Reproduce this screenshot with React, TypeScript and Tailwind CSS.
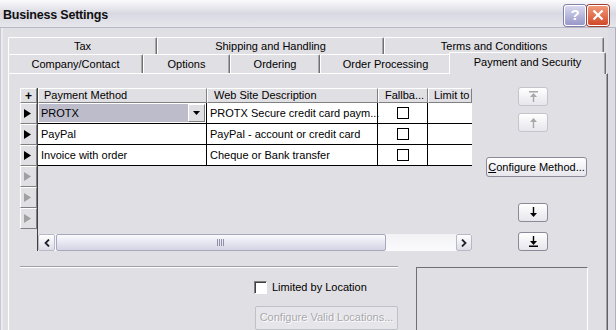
import React from "react";

const raised =
  "border border-t-white border-l-white border-r-[#808080] border-b-[#808080]";

const Tab = ({ label, w, selected }: { label: string; w: number; selected?: boolean }) => (
  <div
    style={{ width: selected ? w + 4 : w }}
    className={
      "flex shrink-0 items-center justify-center rounded-t-[2px] border-t border-l border-r border-t-white border-l-white border-r-[#707070] bg-[#e0dfe3] shadow-[inset_-1px_0_#a8a8ac] " +
      (selected ? "relative z-10 -mx-[2px] -mb-px h-[22px] pb-[3px]" : "h-full")
    }
  >
    {label}
  </div>
);

const Arrow = ({ dark }: { dark?: boolean }) => (
  <svg width="7" height="9" viewBox="0 0 7 9">
    <polygon points="0,0 7,4.5 0,9" fill={dark ? "#000" : "#a0a0a0"} />
  </svg>
);

const RowHead = ({ dark }: { dark?: boolean }) => (
  <div className={"flex h-[21px] items-center pl-[3px] bg-[#e0dfe3] " + raised}>
    <Arrow dark={dark} />
  </div>
);

const Check = () => (
  <div className="h-[12px] w-[12px] border border-black bg-white" />
);

const SmallBtn = ({ kind }: { kind: "top" | "up" | "down" | "bottom" }) => {
  const on = kind === "down" || kind === "bottom";
  const c = on ? "#000" : "#a8a8a8";
  return (
    <div
      className={
        "ml-[32px] flex h-[19px] w-[30px] items-center justify-center rounded-[3px] border bg-gradient-to-b from-white to-[#e6e6ec] " +
        (on ? "border-[#8a8a98]" : "border-[#c4c4cc]")
      }
    >
      <svg width="9" height="11" viewBox="0 0 9 11">
        {kind === "top" && (
          <>
            <rect x="0" y="0" width="9" height="1.5" fill={c} />
            <polygon points="4.5,2 8,6 5.2,6 5.2,11 3.8,11 3.8,6 1,6" fill={c} />
          </>
        )}
        {kind === "up" && (
          <polygon points="4.5,1 8,5 5.2,5 5.2,11 3.8,11 3.8,5 1,5" fill={c} />
        )}
        {kind === "down" && (
          <polygon points="3.8,0 5.2,0 5.2,6 8,6 4.5,10 1,6 3.8,6" fill={c} />
        )}
        {kind === "bottom" && (
          <>
            <polygon points="3.8,0 5.2,0 5.2,5 8,5 4.5,9 1,5 3.8,5" fill={c} />
            <rect x="0" y="9.5" width="9" height="1.5" fill={c} />
          </>
        )}
      </svg>
    </div>
  );
};

const rows = [
  { method: "PayPal", desc: "PayPal - account or credit card" },
  { method: "Invoice with order", desc: "Cheque or Bank transfer" },
];

export default function App() {
  return (
    <div className="flex h-[330px] w-[616px] flex-col overflow-hidden bg-[#e0dfe3] font-['Liberation_Sans',Arial,sans-serif] text-[11px] text-black">
      {/* title bar */}
      <div className="flex h-[28px] shrink-0 items-center justify-between border-b border-[#b8b8c4] bg-gradient-to-b from-[#fbfbfd] via-[#d9d9e2] to-[#e6e6ec] pl-[3px] pr-[7px]">
        <span className="mt-[3px] text-[12.5px] font-bold tracking-[-0.2px] text-[#101010]">Business Settings</span>
        <div className="mt-[3px] flex gap-px">
          <div className="flex h-[21px] w-[22px] items-center justify-center rounded-[3px] border border-white bg-gradient-to-b from-[#d8d8f0] to-[#9898c8] text-[15px] font-bold text-white shadow-[0_0_0_1px_#8080a8]">
            ?
          </div>
          <div className="flex h-[21px] w-[22px] items-center justify-center rounded-[3px] border border-white bg-gradient-to-b from-[#f09878] to-[#d04828] shadow-[0_0_0_1px_#a04030]">
            <svg width="12" height="12" viewBox="0 0 12 12">
              <path d="M1.5 1.5 L10.5 10.5 M10.5 1.5 L1.5 10.5" stroke="#fff" strokeWidth="2.2" />
            </svg>
          </div>
        </div>
      </div>

      {/* body */}
      <div className="flex min-h-0 flex-1">
        <div className="w-[3px] shrink-0 border-l border-[#c8c8d4] bg-[#ebebef]" />
        <div className="ml-[5px] flex w-[600px] shrink-0 flex-col pt-[9px]">
          {/* tab rows */}
          <div className="flex h-[17px] shrink-0 leading-none">
            <Tab label="Tax" w={149} />
            <Tab label="Shipping and Handling" w={227} />
            <Tab label="Terms and Conditions" w={220} />
          </div>
          <div className="flex h-[19px] shrink-0 items-end leading-none">
            <Tab label="Company/Contact" w={135} />
            <Tab label="Options" w={87} />
            <Tab label="Ordering" w={90} />
            <Tab label="Order Processing" w={131} />
            <Tab label="Payment and Security" w={153} selected />
          </div>

          {/* panel */}
          <div className="flex-1 border-t border-l border-r border-t-white border-l-white border-r-[#606060] pl-[11px] pt-[14px] shadow-[inset_-1px_0_#a0a0a4]">
            <div className="flex">
              {/* grid */}
              <div className="flex h-[163px] w-[452px]">
                <div className="flex w-[17px] flex-col">
                  <div className={"flex h-[15px] items-center justify-center bg-[#e0dfe3] text-[12px] font-bold " + raised}>
                    +
                  </div>
                  <RowHead dark />
                  <RowHead dark />
                  <RowHead dark />
                  <RowHead />
                  <RowHead />
                  <RowHead />
                </div>
                <div className="flex w-[435px] flex-col overflow-hidden border-l border-[#404040]">
                  <div className="flex h-[15px] shrink-0 whitespace-nowrap leading-[13px]">
                    <div className={"w-[169px] shrink-0 pl-[5px] " + raised}>Payment Method</div>
                    <div className={"w-[171px] shrink-0 pl-[6px] " + raised}>Web Site Description</div>
                    <div className={"w-[50px] shrink-0 pl-[6px] " + raised}>Fallba...</div>
                    <div className={"w-[44px] shrink-0 overflow-hidden pl-[5px] " + raised}>Limit to D</div>
                  </div>
                  <div className="flex h-[21px] shrink-0 items-stretch whitespace-nowrap border-b border-black bg-white">
                    <div className="flex w-[169px] shrink-0 items-center border-r border-black p-[1px]">
                      <div className="flex h-full flex-1 items-center justify-between bg-[#bdbccb] pl-[2px]">
                        <span>PROTX</span>
                        <div className={"flex h-[18px] w-[17px] items-center justify-center bg-[#e0dfe3] " + raised}>
                          <svg width="7" height="4" viewBox="0 0 7 4">
                            <polygon points="0,0 7,0 3.5,4" fill="#000" />
                          </svg>
                        </div>
                      </div>
                    </div>
                    <div className="flex w-[171px] shrink-0 items-center border-r border-black pl-[3px]">
                      PROTX Secure credit card paym...
                    </div>
                    <div className="flex w-[50px] shrink-0 items-center justify-center border-r border-black">
                      <Check />
                    </div>
                    <div className="w-[60px] shrink-0" />
                  </div>
                  {rows.map((r) => (
                    <div key={r.method} className="flex h-[21px] shrink-0 whitespace-nowrap border-b border-black bg-white">
                      <div className="flex w-[169px] shrink-0 items-center border-r border-black pl-[3px]">{r.method}</div>
                      <div className="flex w-[171px] shrink-0 items-center border-r border-black pl-[3px]">{r.desc}</div>
                      <div className="flex w-[50px] shrink-0 items-center justify-center border-r border-black">
                        <Check />
                      </div>
                      <div className="w-[60px] shrink-0" />
                    </div>
                  ))}
                  <div className="flex-1" />
                  {/* scrollbar */}
                  <div className="flex h-[17px] shrink-0 bg-gradient-to-b from-[#f2f2f6] to-[#fbfbfd]">
                    <div className="flex w-[17px] items-center justify-center rounded-[2px] border border-[#b8b8c8] bg-gradient-to-b from-white to-[#dcdce6]">
                      <svg width="6" height="8" viewBox="0 0 6 8">
                        <path d="M5 0.5 L1.5 4 L5 7.5" stroke="#202030" strokeWidth="1.8" fill="none" />
                      </svg>
                    </div>
                    <div className="ml-px flex w-[330px] items-center justify-center rounded-[2px] border border-[#a8a8bc] bg-gradient-to-b from-[#fafafe] to-[#d4d4e4]">
                      <svg width="8" height="7" viewBox="0 0 8 7">
                        <path d="M0.5 0 V7 M2.5 0 V7 M4.5 0 V7 M6.5 0 V7" stroke="#9090a8" strokeWidth="1" />
                      </svg>
                    </div>
                    <div className="flex-1" />
                    <div className="flex w-[16px] items-center justify-center rounded-[2px] border border-[#b8b8c8] bg-gradient-to-b from-white to-[#dcdce6]">
                      <svg width="6" height="8" viewBox="0 0 6 8">
                        <path d="M1 0.5 L4.5 4 L1 7.5" stroke="#202030" strokeWidth="1.8" fill="none" />
                      </svg>
                    </div>
                  </div>
                </div>
              </div>

              {/* right column */}
              <div className="-mt-px ml-[14px] flex w-[101px] flex-col">
                <SmallBtn kind="top" />
                <div className="mt-[7px]">
                  <SmallBtn kind="up" />
                </div>
                <div className="mt-[25px] flex h-[20px] items-center justify-center rounded-[3px] border border-[#8a8a98] bg-gradient-to-b from-white to-[#e6e6ec] whitespace-nowrap">
                  <span>
                    <span className="underline">C</span>onfigure Method...
                  </span>
                </div>
                <div className="mt-[26px]">
                  <SmallBtn kind="down" />
                </div>
                <div className="mt-[10px]">
                  <SmallBtn kind="bottom" />
                </div>
              </div>
            </div>

            {/* bottom section */}
            <div className="mt-[15px] flex">
              <div className="flex w-[378px] flex-col">
                <div className="h-[2px] border-t border-b border-t-[#a0a0a4] border-b-white" />
                <div className="ml-[234px] mt-[11px] flex items-center gap-[5px]">
                  <div className="h-[13px] w-[13px] border border-t-[#808080] border-l-[#808080] border-r-white border-b-white bg-white shadow-[inset_1px_1px_#404040]" />
                  <span>Limited by Location</span>
                </div>
                <div className="ml-[235px] mt-[10px] flex h-[24px] items-center justify-center rounded-[2px] border border-[#c0c0c8] bg-[#e6e6ea] text-[#a8a8ac] [text-shadow:1px_1px_#fff] whitespace-nowrap">
                  Configure Valid Locations...
                </div>
              </div>
              <div className="ml-[18px] mt-px h-[70px] w-[172px] border border-t-[#707070] border-l-[#707070] border-r-white border-b-white" />
            </div>
          </div>
        </div>
        <div className="w-[8px] shrink-0 border-r border-[#b0b0bc] bg-[#dcdce2]" />
      </div>
    </div>
  );
}
